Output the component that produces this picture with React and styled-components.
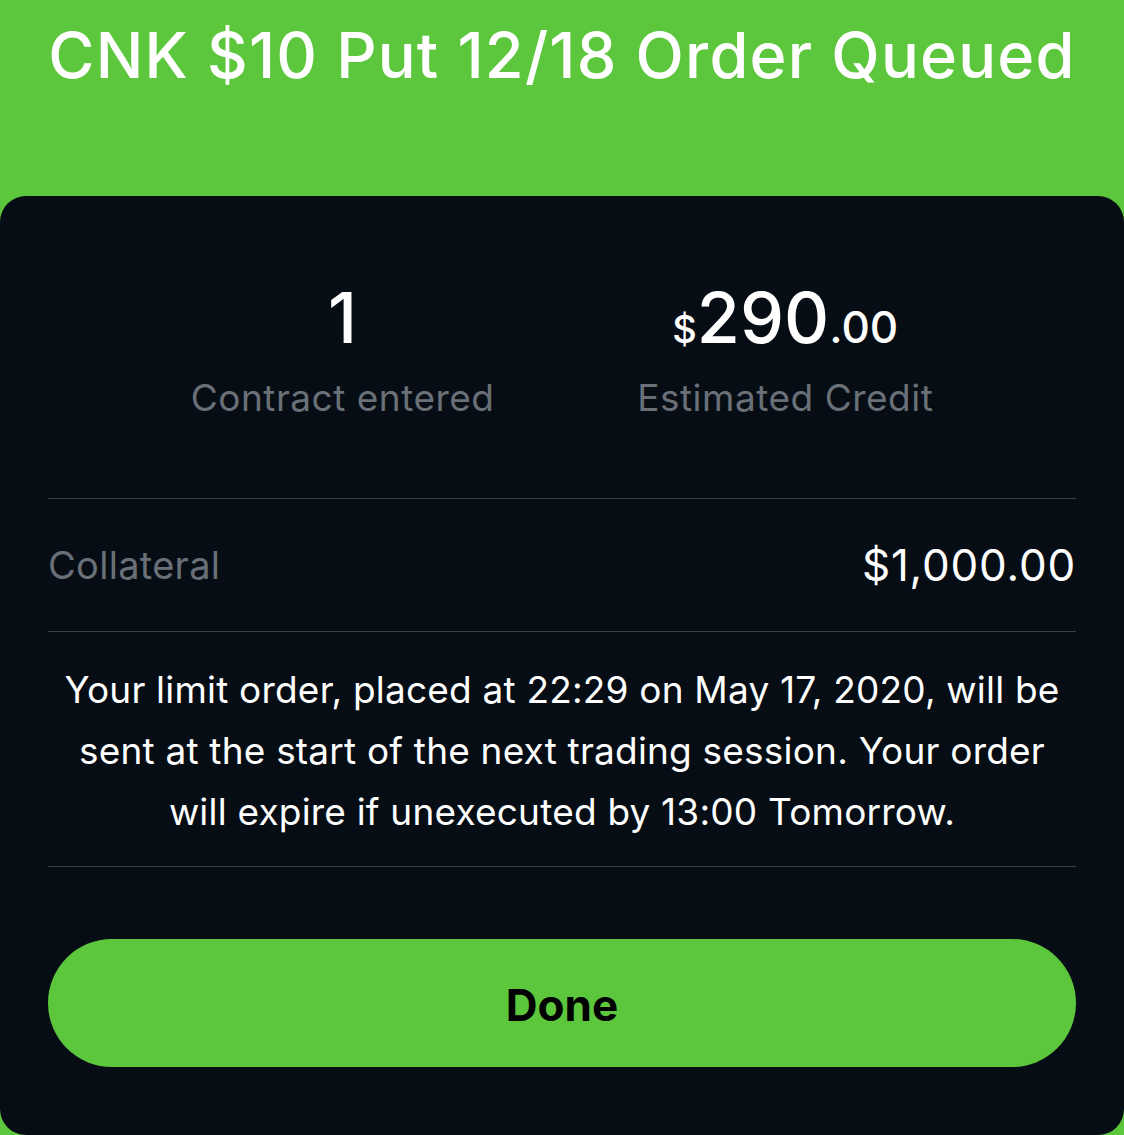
import styled, { createGlobalStyle } from "styled-components";

const GlobalStyle = createGlobalStyle`
  html, body {
    margin: 0;
    padding: 0;
    background: #5cc63c;
    overflow: hidden;
  }
  body {
    font-family: Inter, "Noto Sans", "Liberation Sans", sans-serif;
    -webkit-font-smoothing: antialiased;
  }
`;

const Page = styled.div`
  width: 1124px;
  height: 1135px;
  display: flex;
  flex-direction: column;
  background: #5cc63c;
`;

const Header = styled.header`
  height: 197px;
  padding-top: 17px;
  box-sizing: border-box;
  text-align: center;
`;

const Title = styled.h1`
  margin: 0;
  font-size: 63px;
  line-height: 76px;
  font-weight: 500;
  color: #ffffff;
  letter-spacing: 1.2px;
`;

const Card = styled.section`
  height: 939px;
  flex-shrink: 0;
  background: #070d15;
  border-radius: 26px;
  padding: 0 48px;
  box-sizing: border-box;
  display: flex;
  flex-direction: column;
`;

const Stats = styled.div`
  display: flex;
  justify-content: space-evenly;
  padding-top: 84px;
  height: 303px;
  box-sizing: border-box;
  border-bottom: 1px solid #3b4148;
`;

const Stat = styled.div`
  display: flex;
  flex-direction: column;
  align-items: center;
`;

const StatValue = styled.div`
  display: flex;
  align-items: baseline;
  height: 76px;
  color: #ffffff;
  font-size: 70px;
  line-height: 76px;
  font-weight: 500;
`;

const Small = styled.span`
  font-size: ${(p) => p.size}px;
  font-weight: 500;
`;

const StatLabel = styled.div`
  margin-top: 20px;
  font-size: 37px;
  line-height: 44px;
  color: #6a7077;
  letter-spacing: 0.5px;
`;

const Row = styled.div`
  display: flex;
  justify-content: space-between;
  align-items: center;
  height: 132px;
  border-bottom: 1px solid #3b4148;
`;

const RowLabel = styled.span`
  font-size: 38px;
  color: #6a7077;
  letter-spacing: 0.3px;
`;

const RowValue = styled.span`
  font-size: 44px;
  color: #ffffff;
  font-weight: 400;
  letter-spacing: 0.8px;
`;

const Note = styled.p`
  margin: 0;
  padding: 27px 0 24px;
  font-size: 37px;
  line-height: 61px;
  color: #ffffff;
  text-align: center;
  letter-spacing: 0.2px;
  border-bottom: 1px solid #3b4148;
`;

const DoneButton = styled.button`
  margin-top: 72px;
  height: 128px;
  width: 100%;
  border: none;
  border-radius: 64px;
  background: #5cc63c;
  color: #000000;
  font-family: inherit;
  font-size: 44px;
  line-height: 1;
  padding: 4px 0 0;
  font-weight: 700;
  cursor: pointer;
`;

export default function App() {
  return (
    <>
      <GlobalStyle />
      <Page>
        <Header>
          <Title>CNK $10 Put 12/18 Order Queued</Title>
        </Header>
        <Card>
          <Stats>
            <Stat>
              <StatValue>1</StatValue>
              <StatLabel>Contract entered</StatLabel>
            </Stat>
            <Stat>
              <StatValue>
                <Small size={38}>$</Small>290<Small size={44}>.00</Small>
              </StatValue>
              <StatLabel>Estimated Credit</StatLabel>
            </Stat>
          </Stats>
          <Row>
            <RowLabel>Collateral</RowLabel>
            <RowValue>$1,000.00</RowValue>
          </Row>
          <Note>
            Your limit order, placed at 22:29 on May 17, 2020, will be sent at
            the start of the next trading session. Your order will expire if
            unexecuted by 13:00 Tomorrow.
          </Note>
          <DoneButton>Done</DoneButton>
        </Card>
      </Page>
    </>
  );
}
